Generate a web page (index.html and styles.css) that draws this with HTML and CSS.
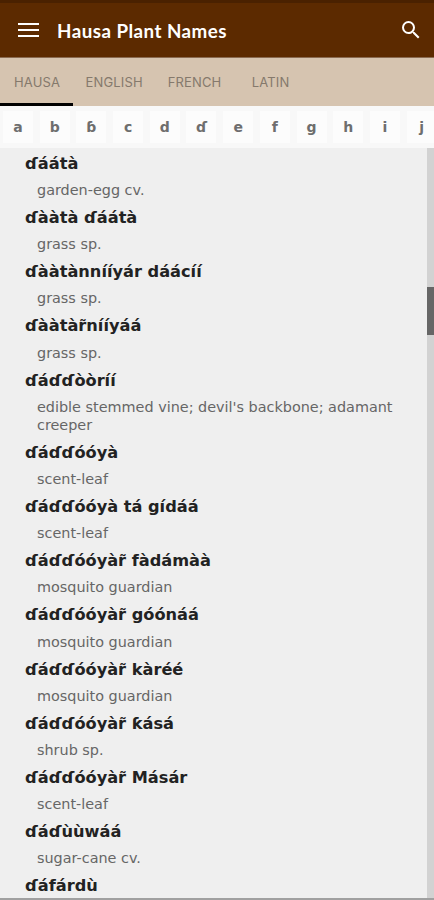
FILE: index.html
```html
<!DOCTYPE html>
<html lang="ha">
<head>
<meta charset="utf-8">
<title>Hausa Plant Names</title>
<link rel="stylesheet" href="styles.css">
</head>
<body>
<div class="app">
  <header class="appbar">
    <svg class="icon menu" width="21" height="14" viewBox="0 0 21 14"><path d="M0 0h21v2H0zM0 6h21v2H0zM0 12h21v2H0z" fill="#fff"/></svg>
    <h1 class="title">Hausa Plant Names</h1>
    <svg class="icon search" width="24" height="24" viewBox="0 0 24 24"><path d="M15.5 14h-.79l-.28-.27A6.47 6.47 0 0 0 16 9.5 6.5 6.5 0 1 0 9.5 16c1.61 0 3.09-.59 4.23-1.57l.27.28v.79l5 4.99L20.49 19l-4.99-5zm-6 0C7.01 14 5 11.99 5 9.5S7.01 5 9.5 5 14 7.01 14 9.5 11.99 14 9.5 14z" fill="#fff"/></svg>
  </header>
  <nav class="tabs">
    <div class="tab active">HAUSA</div>
    <div class="tab">ENGLISH</div>
    <div class="tab wide">FRENCH</div>
    <div class="tab">LATIN</div>
  </nav>
  <div class="letters">
    <span class="letter">a</span><span class="letter">b</span><span class="letter">ɓ</span><span class="letter">c</span><span class="letter">d</span><span class="letter">ɗ</span><span class="letter">e</span><span class="letter">f</span><span class="letter">g</span><span class="letter">h</span><span class="letter">i</span><span class="letter">j</span>
  </div>
  <main class="content">
    <div class="list">
      <div class="term">ɗáátà</div><div class="gloss">garden-egg cv.</div>
      <div class="term">ɗààtà ɗáátà</div><div class="gloss">grass sp.</div>
      <div class="term">ɗààtànnííyár dáácíí</div><div class="gloss">grass sp.</div>
      <div class="term">ɗààtàr̃nííyáá</div><div class="gloss">grass sp.</div>
      <div class="term">ɗáɗɗòòríí</div><div class="gloss">edible stemmed vine; devil's backbone; adamant creeper</div>
      <div class="term">ɗáɗɗóóyà</div><div class="gloss">scent-leaf</div>
      <div class="term">ɗáɗɗóóyà tá gídáá</div><div class="gloss">scent-leaf</div>
      <div class="term">ɗáɗɗóóyàr̃ fàdámàà</div><div class="gloss">mosquito guardian</div>
      <div class="term">ɗáɗɗóóyàr̃ góónáá</div><div class="gloss">mosquito guardian</div>
      <div class="term">ɗáɗɗóóyàr̃ kàréé</div><div class="gloss">mosquito guardian</div>
      <div class="term">ɗáɗɗóóyàr̃ ƙásá</div><div class="gloss">shrub sp.</div>
      <div class="term">ɗáɗɗóóyàr̃ Másár</div><div class="gloss">scent-leaf</div>
      <div class="term">ɗáɗùùwáá</div><div class="gloss">sugar-cane cv.</div>
      <div class="term">ɗáfárdù</div>
    </div>
    <div class="track"><div class="thumb"></div></div>
  </main>
</div>
</body>
</html>
```
FILE: styles.css
```css
* { box-sizing: border-box; }
html, body { margin: 0; padding: 0; }
body { font-family: "DejaVu Sans", sans-serif; background: #efefef; }
.app { width: 434px; height: 900px; display: flex; flex-direction: column; overflow: hidden; border-bottom: 2px solid #a0a0a0; }
.appbar { height: 58px; flex: none; display: flex; align-items: center; padding: 0 11px 0 18px; background: #5c2a00; border-top: 3px solid #4a2100; border-bottom: 1px solid #8a6a50; }
.icon { flex: none; }
.search { margin-left: auto; }
.title { margin: 0 0 0 18px; font-family: "Lato", sans-serif; font-size: 18.8px; font-weight: 700; letter-spacing: 0.45px; color: #fff; }
.tabs { height: 48px; flex: none; display: flex; background: #d6c4b0; }
.tab { display: flex; align-items: center; padding: 3px 12.5px 0; font-family: "Inter", sans-serif; font-size: 13px; letter-spacing: 0.15px; color: #85796c; border-bottom: 3px solid transparent; }
.tab.active { padding: 3px 14px 0; width: 73px; border-bottom-color: #000; }
.tab.wide { min-width: 84px; }
.letters { height: 42px; flex: none; display: flex; padding: 5px 0 0 3px; gap: 6.7px; background: #f8f8f8; }
.letter { flex: none; width: 30px; height: 32px; display: flex; align-items: center; justify-content: center; font-size: 14px; font-weight: 700; color: #6e6e6e; background: #fcfcfc; }
.content { flex: 1; min-height: 0; display: flex; }
.list { flex: 1; min-width: 0; padding: 2px 30px 0 25px; overflow: hidden; }
.term { height: 27.1px; line-height: 27px; font-size: 16.2px; font-weight: 700; color: #222; }
.gloss { padding: 4px 0 4.75px 12px; line-height: 18.3px; font-size: 14.4px; color: #666; }
.track { width: 7px; flex: none; background: #d2d2d2; }
.thumb { width: 7px; height: 48px; margin-top: 139px; background: #666; }
```
